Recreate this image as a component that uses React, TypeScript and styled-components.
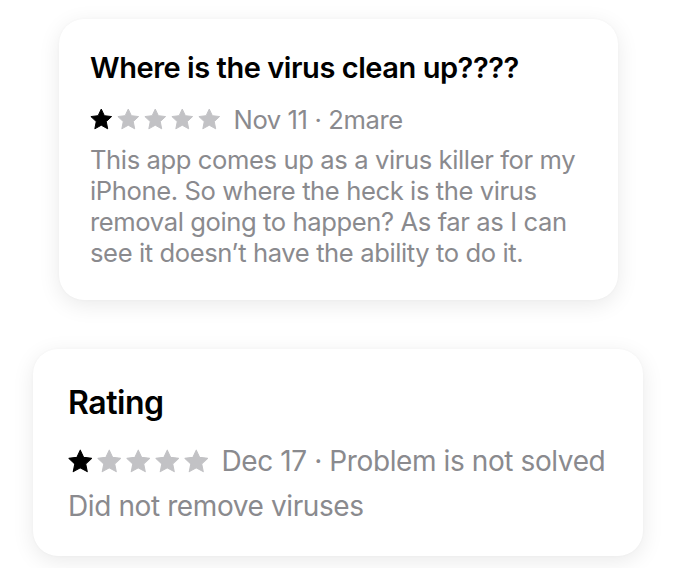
import styled, { createGlobalStyle } from 'styled-components';

const Global = createGlobalStyle`
  html, body {
    margin: 0;
    background: #fff;
  }
  body {
    font-family: Inter, "Noto Sans", sans-serif;
    -webkit-font-smoothing: antialiased;
  }
`;

const Page = styled.main`
  width: 694px;
  height: 568px;
  overflow: hidden;
  display: flex;
  flex-direction: column;
  gap: 49px;
  padding-top: 19px;
  box-sizing: border-box;
`;

type Size = {
  left: number;
  width: number;
  pad: [number, number, number];
  body: number;
  title: number;
  line: number;
  titleGap: number;
  metaGap: number;
  star: number;
  starGap: number;
};

const Card = styled.section<{ $s: Size }>`
  margin-left: ${({ $s }) => $s.left}px;
  width: ${({ $s }) => $s.width}px;
  box-sizing: border-box;
  background: #fff;
  border-radius: 25px;
  box-shadow: 0 5px 22px rgba(0, 0, 0, 0.085), 0 0 3px rgba(0, 0, 0, 0.03);
  padding: ${({ $s }) => `${$s.pad[0]}px ${$s.pad[1]}px ${$s.pad[2]}px`};
  --body: ${({ $s }) => $s.body}px;
  --title: ${({ $s }) => $s.title}px;
  --line: ${({ $s }) => $s.line}px;
  --title-gap: ${({ $s }) => $s.titleGap}px;
  --meta-gap: ${({ $s }) => $s.metaGap}px;
  --star: ${({ $s }) => $s.star}px;
  --star-gap: ${({ $s }) => $s.starGap}px;
`;

const Title = styled.h3`
  margin: 0 0 var(--title-gap);
  font-size: var(--title);
  line-height: calc(var(--title) * 1.18);
  font-weight: 600;
  letter-spacing: -0.45px;
  color: #000;
`;

const Meta = styled.div`
  display: flex;
  align-items: center;
  gap: 13px;
  font-size: var(--body);
  line-height: var(--line);
  letter-spacing: -0.4px;
  color: #8a8a8e;
  margin-bottom: var(--meta-gap);
  white-space: nowrap;
`;

const Stars = styled.div`
  display: flex;
  gap: var(--star-gap);
  svg {
    width: var(--star);
    height: var(--star);
    display: block;
  }
`;

const Body = styled.p`
  margin: 0;
  font-size: var(--body);
  line-height: var(--line);
  letter-spacing: -0.4px;
  color: #8a8a8e;
`;

function Star({ on }: { on: boolean }) {
  const c = on ? '#000' : '#c2c2c5';
  return (
    <svg viewBox="-0.6 -0.8 25.2 25.2">
      <path
        d="M12 0.4L15.5 7.8L23.6 8.8L17.6 14.4L19.2 22.5L12 18.5L4.8 22.5L6.4 14.4L0.4 8.8L8.5 7.8Z"
        fill={c}
        stroke={c}
        strokeWidth="1.1"
        strokeLinejoin="round"
      />
    </svg>
  );
}

function Rating({ value }: { value: number }) {
  return (
    <Stars>
      {[1, 2, 3, 4, 5].map((n) => (
        <Star key={n} on={n <= value} />
      ))}
    </Stars>
  );
}

const first: Size = {
  left: 59,
  width: 559,
  pad: [32, 31, 32],
  body: 25.6,
  title: 29,
  line: 31,
  titleGap: 19,
  metaGap: 9,
  star: 22.5,
  starGap: 4.5,
};

const second: Size = {
  left: 33,
  width: 610,
  pad: [35, 35, 33],
  body: 28,
  title: 32,
  line: 34,
  titleGap: 22,
  metaGap: 11,
  star: 24.5,
  starGap: 4.5,
};

export default function App() {
  return (
    <>
      <Global />
      <Page>
        <Card $s={first}>
          <Title>Where is the virus clean up????</Title>
          <Meta>
            <Rating value={1} />
            <span>Nov 11 · 2mare</span>
          </Meta>
          <Body>
            This app comes up as a virus killer for my iPhone. So where the heck is the virus
            removal going to happen? As far as I can see it doesn’t have the ability to do it.
          </Body>
        </Card>
        <Card $s={second}>
          <Title>Rating</Title>
          <Meta>
            <Rating value={1} />
            <span>Dec 17 · Problem is not solved</span>
          </Meta>
          <Body>Did not remove viruses</Body>
        </Card>
      </Page>
    </>
  );
}
